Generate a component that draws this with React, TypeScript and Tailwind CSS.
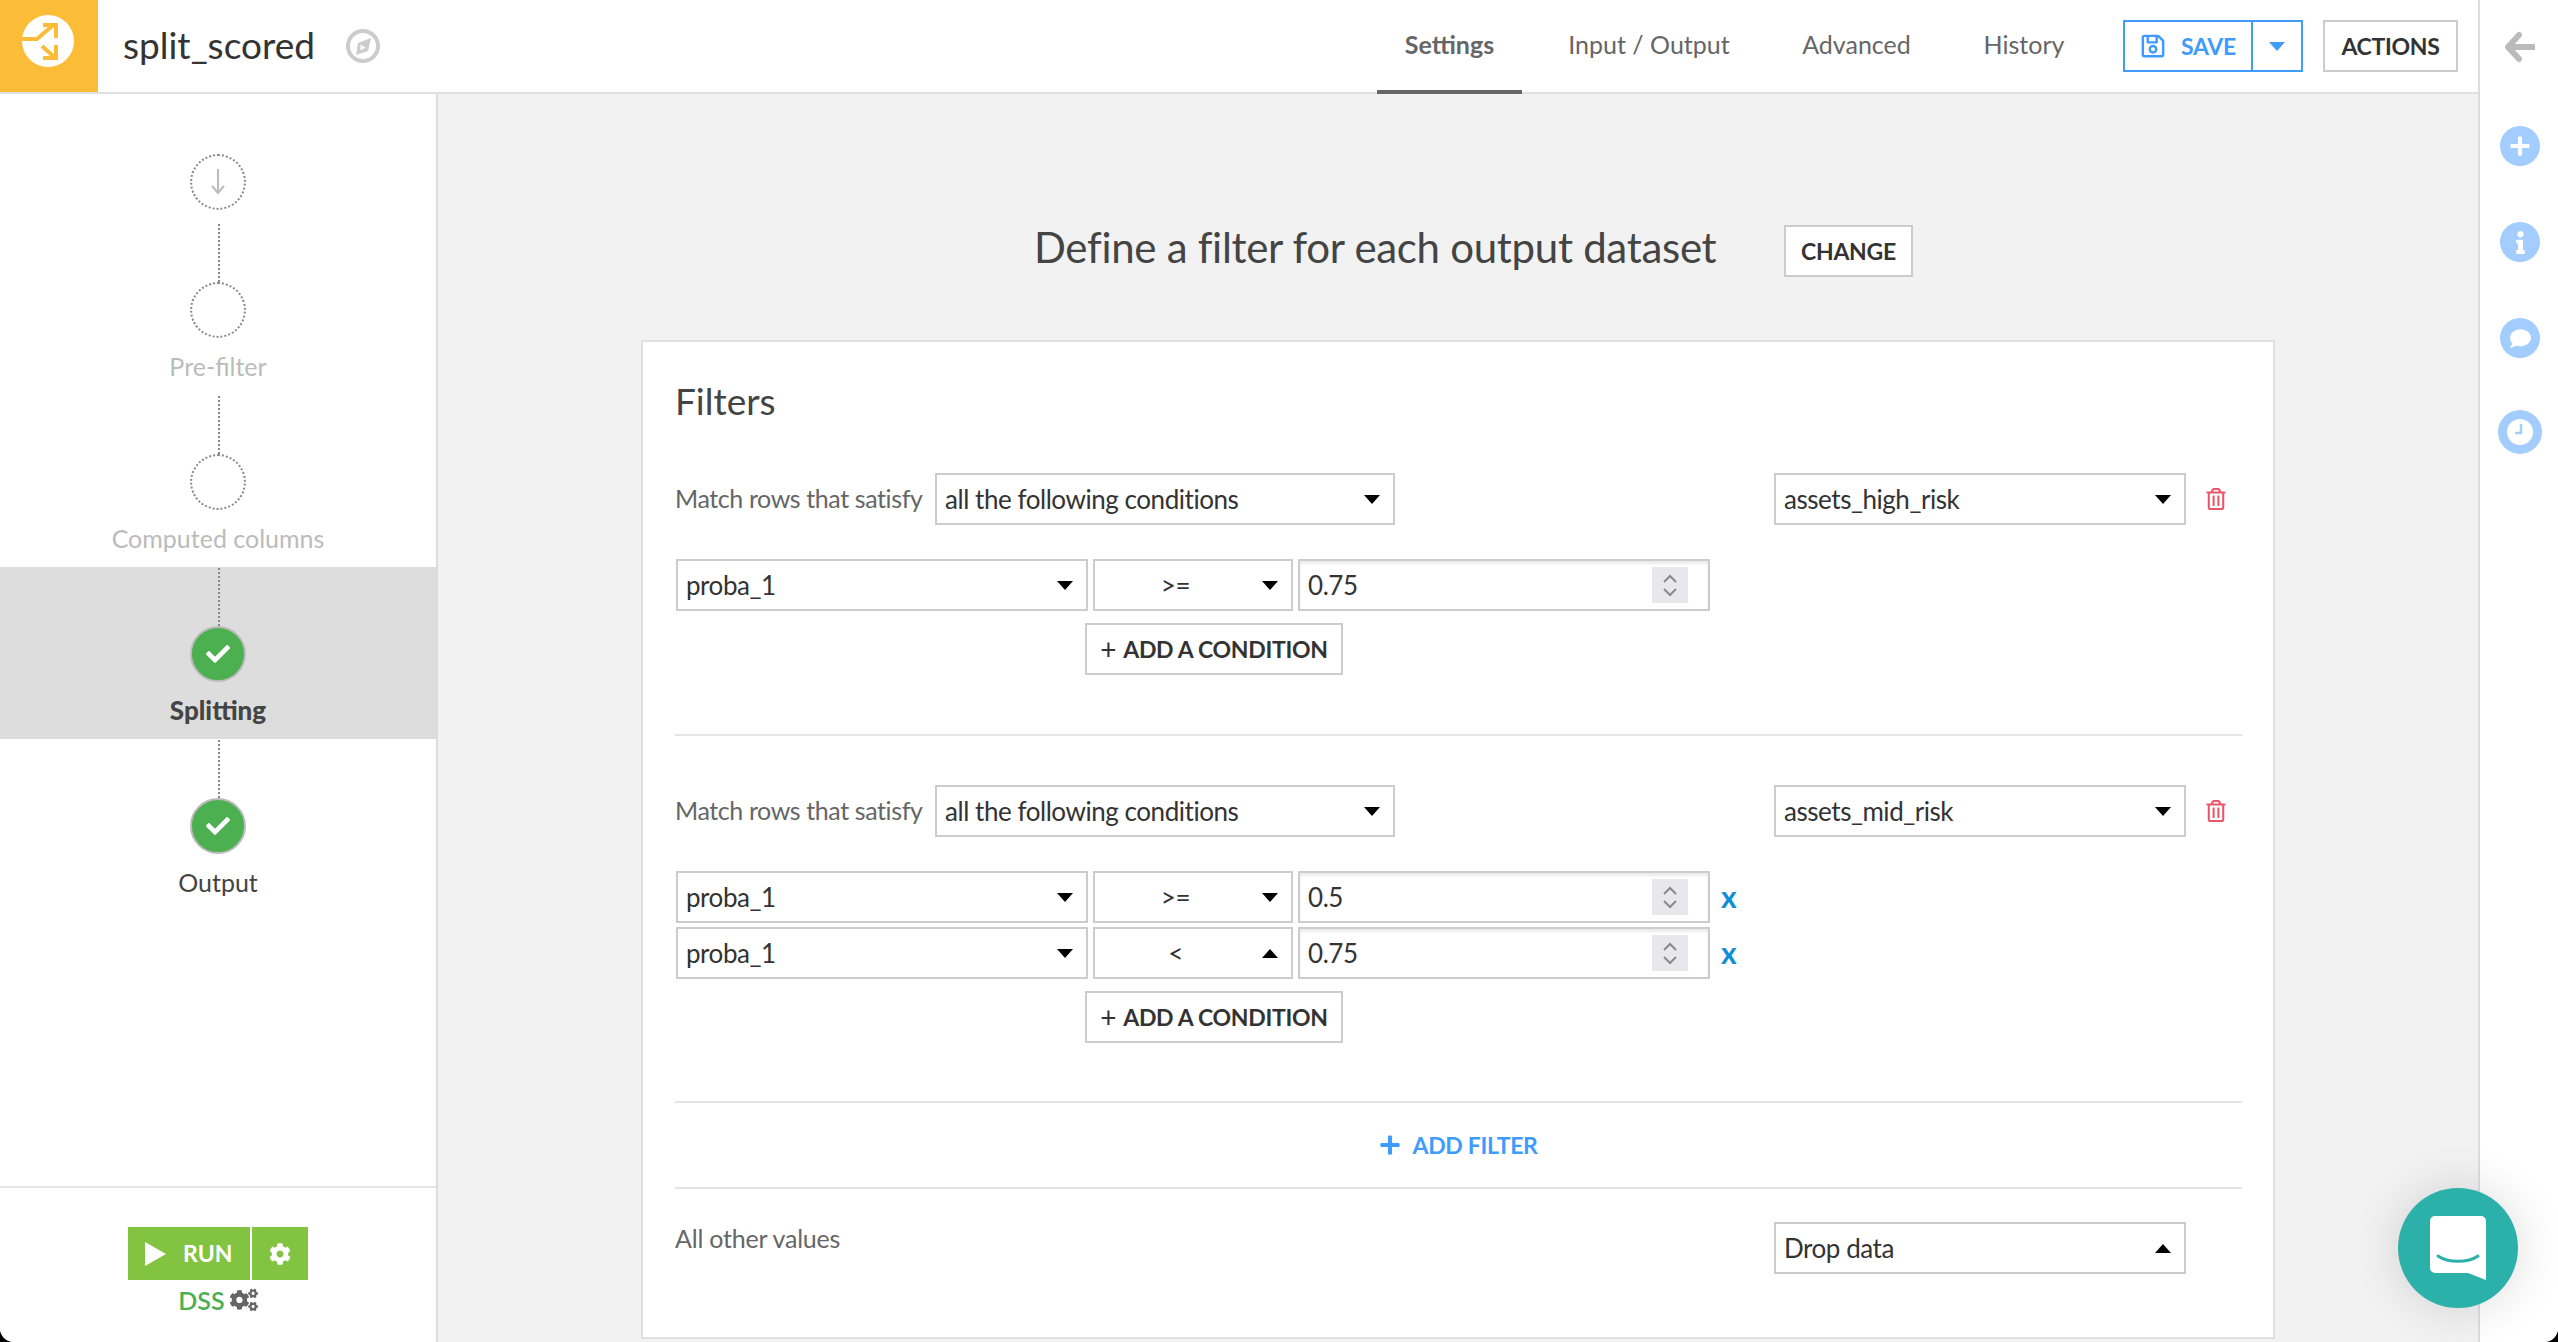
import { FaCheck, FaCog, FaCogs, FaComment, FaInfo, FaPlus, FaRegSave, FaRegTrashAlt } from 'react-icons/fa';

function Arrow({ up = false, color = '#000' }: { up?: boolean; color?: string }) {
  return (
    <svg width="16" height="9" viewBox="0 0 16 9" className="shrink-0">
      <polygon points={up ? '8,0 16,9 0,9' : '0,0 16,0 8,9'} fill={color} />
    </svg>
  );
}

function Select({ value, width, up = false, center = false }: { value: string; width: string; up?: boolean; center?: boolean }) {
  return (
    <div className={`flex h-[52px] shrink-0 items-center justify-between border-2 border-[#ccc] bg-white pl-[8px] pr-[13px] text-[26px] tracking-[-0.45px] text-[#333] ${width}`}>
      <span className={center ? 'flex-1 pr-[14px] text-center' : ''}>{value}</span>
      <Arrow up={up} />
    </div>
  );
}

function NumberInput({ value }: { value: string }) {
  return (
    <div className="flex h-[52px] w-[412px] shrink-0 items-center justify-between border-2 border-[#ccc] bg-white pl-[8px] pr-[20px] text-[26px] tracking-[-0.45px] text-[#333] shadow-[inset_0_3px_3px_rgba(0,0,0,0.08)]">
      <span>{value}</span>
      <div className="flex h-[36px] w-[36px] flex-col items-center justify-center gap-[5px] bg-[#e8e8ec]">
        <svg width="14" height="9" viewBox="0 0 14 9"><path d="M1 8l6-6 6 6" fill="none" stroke="#8a8a8a" strokeWidth="2" /></svg>
        <svg width="14" height="9" viewBox="0 0 14 9"><path d="M1 1l6 6 6-6" fill="none" stroke="#8a8a8a" strokeWidth="2" /></svg>
      </div>
    </div>
  );
}

function Button({ children, className = '' }: { children: React.ReactNode; className?: string }) {
  return (
    <div className={`flex h-[52px] items-center justify-center border-2 border-[#ccc] bg-white text-[23px] font-bold tracking-[-0.3px] text-[#333] ${className}`}>
      {children}
    </div>
  );
}

function ConditionRow({ op, value, up = false, removable = false }: { op: string; value: string; up?: boolean; removable?: boolean }) {
  return (
    <div className="ml-px flex items-center gap-[5px]">
      <Select value="proba_1" width="w-[412px]" />
      <Select value={op} width="w-[200px]" up={up} center />
      <NumberInput value={value} />
      {removable && <span className="mb-[3px] ml-[6px] text-[30px] leading-[28px] font-bold text-[#0f8fd6]">x</span>}
    </div>
  );
}

function FilterBlock({ output, children, spacing }: { output: string; children: React.ReactNode; spacing: string }) {
  return (
    <div className={`border-b-2 border-[#e4e4e4] ${spacing}`}>
      <div className="flex items-center">
        <div className="w-[260px] shrink-0 text-[25px] tracking-[-0.4px] text-[#666]">Match rows that satisfy</div>
        <Select value="all the following conditions" width="w-[460px]" />
        <div className="ml-[379px]">
          <Select value={output} width="w-[412px]" />
        </div>
        <FaRegTrashAlt className="ml-[19px] text-[#e8566b]" size={22} />
      </div>
      <div className="mt-[34px] flex flex-col gap-[4px]">{children}</div>
      <Button className="ml-[410px] mt-[12px] w-[258px]">
        <span className="mr-[7px] text-[28px] font-normal">+</span>ADD A CONDITION
      </Button>
    </div>
  );
}

function Step({ label, state }: { label: string; state: 'todo' | 'done' | 'active' }) {
  const labelColor = state === 'todo' ? 'text-[#bbb]' : 'text-[#444]';
  return (
    <div className={`flex h-[172px] flex-col items-center ${state === 'active' ? 'bg-[#ddd]' : ''}`}>
      <div className="ml-[2px] mt-px h-[58px] border-l-2 border-dotted border-[#888]" />
      {state === 'todo' ? (
        <div className="h-[56px] w-[56px] rounded-full border-2 border-dotted border-[#888]" />
      ) : (
        <div className="flex h-[56px] w-[56px] items-center justify-center rounded-full border-2 border-[#bbb] bg-[#4caf50]">
          <FaCheck className="text-white" size={24} />
        </div>
      )}
      <div className={`mt-[13px] leading-[30px] ${labelColor} ${state === 'active' ? 'text-[26px] font-black' : 'text-[25px]'}`}>{label}</div>
    </div>
  );
}

function RailDot({ children, className = '' }: { children: React.ReactNode; className?: string }) {
  return <div className={`flex h-[40px] w-[40px] items-center justify-center rounded-full bg-[#a3cdfe] text-white ${className}`}>{children}</div>;
}

export default function App() {
  return (
    <div className="h-screen w-full overflow-hidden bg-black">
      <div className="relative flex h-full w-full overflow-hidden rounded-b-[14px] bg-white font-['Lato',sans-serif] text-[#333]">
        <div className="flex min-w-0 flex-1 flex-col">
          {/* Top bar */}
          <header className="flex h-[94px] shrink-0 items-start border-b-2 border-[#e0e0e0] bg-white">
            <div className="flex h-[92px] w-[98px] shrink-0 items-center justify-center bg-[#fbbd38]">
              <svg width="98" height="92" viewBox="0 0 98 92">
                <circle cx="48" cy="41" r="26" fill="#fff" />
                <path d="M22 39h15l15-13M43 25h13v13M42 46l12 11M43 58h13V45" fill="none" stroke="#fbbd38" strokeWidth="4" />
              </svg>
            </div>
            <div className="ml-[25px] mt-[22px] text-[37px] leading-[46px] text-[#333]">split_scored</div>
            <svg width="36" height="36" viewBox="0 0 36 36" className="ml-[30px] mt-[28px]">
              <circle cx="18" cy="18" r="15" fill="none" stroke="#ccc" strokeWidth="4" />
              <path d="M26 10l-3 13-12 4 2-12z" fill="#ccc" />
              <path d="M15.500 16.500v6l5-3z" fill="#fff" />
            </svg>
            <nav className="ml-auto flex h-[94px] text-[25px] text-[#666]">
              <div className="flex h-full w-[145px] items-center justify-center border-b-4 border-[#666] font-bold">Settings</div>
              <div className="ml-[20px] flex h-full w-[212px] items-center justify-center pb-[4px] pl-[2px]">Input / Output</div>
              <div className="ml-[22px] flex h-full w-[159px] items-center justify-center pb-[4px] pl-[2px]">Advanced</div>
              <div className="ml-[23px] flex h-full w-[130px] items-center justify-center pb-[4px] pl-[2px]">History</div>
            </nav>
            <div className="ml-[35px] mt-[20px] flex h-[52px] w-[180px] border-2 border-[#3f9bfc] text-[#3f9bfc]">
              <div className="flex w-[128px] items-center justify-center gap-[15px] border-r-2 border-[#3f9bfc] text-[23px] font-bold tracking-[-0.3px]">
                <FaRegSave size={26} />
                SAVE
              </div>
              <div className="flex flex-1 items-center justify-center">
                <Arrow color="#3f9bfc" />
              </div>
            </div>
            <div className="ml-[20px] mr-[20px] mt-[20px] flex h-[52px] w-[135px] items-center justify-center border-2 border-[#ccc] text-[23px] font-bold tracking-[-0.3px]">ACTIONS</div>
          </header>

          <div className="flex min-h-0 flex-1">
            {/* Recipe steps */}
            <aside className="flex w-[438px] shrink-0 flex-col justify-between border-r-2 border-[#ddd] bg-white">
              <div>
                <div className="mx-auto mb-[13px] mt-[60px] flex h-[56px] w-[56px] items-center justify-center rounded-full border-2 border-dotted border-[#888]">
                  <svg width="14" height="26" viewBox="0 0 14 26">
                    <path d="M7 0v24M1 17l6 7 6-7" fill="none" stroke="#bbb" strokeWidth="2" />
                  </svg>
                </div>
                <Step label="Pre-filter" state="todo" />
                <Step label="Computed columns" state="todo" />
                <Step label="Splitting" state="active" />
                <Step label="Output" state="done" />
              </div>
              <div className="flex h-[156px] shrink-0 flex-col items-center border-t-2 border-[#e4e4e4] pt-[39px]">
                <div className="flex h-[53px] gap-[2px] text-white">
                  <div className="flex w-[122px] items-center gap-[17px] bg-[#82c341] pl-[17px] text-[23px] font-bold">
                    <svg width="21" height="24" viewBox="0 0 21 24"><polygon points="0,0 21,12 0,24" fill="#fff" /></svg>
                    RUN
                  </div>
                  <div className="flex w-[56px] items-center justify-center bg-[#82c341]">
                    <FaCog size={22} />
                  </div>
                </div>
                <div className="mt-[5px] flex items-center gap-[5px] text-[25px] font-semibold leading-[30px] text-[#4caf50]">
                  DSS
                  <FaCogs className="text-[#666]" size={28} />
                </div>
              </div>
            </aside>

            {/* Settings */}
            <main className="min-w-0 flex-1 bg-[#f2f2f2]">
              <div className="mx-auto w-[1634px]">
                <div className="mb-[63px] mt-[131px] flex h-[52px] items-center pl-[393px]">
                  <h1 className="w-[750px] shrink-0 pb-[7px] text-[42px] tracking-[-0.3px] text-[#444]">Define a filter for each output dataset</h1>
                  <Button className="w-[129px]">CHANGE</Button>
                </div>
                <section className="h-[999px] border-2 border-[#e0e0e0] bg-white pl-[32px] pr-[31px] pt-[39px]">
                  <h2 className="text-[37px] leading-[40px] text-[#444]">Filters</h2>
                  <FilterBlock output="assets_high_risk" spacing="mt-[52px] pb-[59px]">
                    <ConditionRow op=">=" value="0.75" />
                  </FilterBlock>
                  <FilterBlock output="assets_mid_risk" spacing="pt-[49px] pb-[58px]">
                    <ConditionRow op=">=" value="0.5" removable />
                    <ConditionRow op="<" value="0.75" up removable />
                  </FilterBlock>
                  <div className="flex h-[86px] items-center justify-center gap-[11px] border-b-2 border-[#e4e4e4] text-[23px] font-bold tracking-[-0.3px] text-[#3f9bfc]">
                    <FaPlus size={22} />
                    ADD FILTER
                  </div>
                  <div className="flex items-start pt-[33px]">
                    <div className="mt-[1px] w-[1099px] shrink-0 text-[25px] leading-[30px] tracking-[-0.2px] text-[#666]">All other values</div>
                    <Select value="Drop data" width="w-[412px]" up />
                  </div>
                </section>
              </div>
            </main>
          </div>
        </div>

        {/* Right rail */}
        <div className="flex w-[80px] shrink-0 flex-col items-center border-l-2 border-[#ddd] bg-white pl-[2px]">
          <svg width="30" height="32" viewBox="0 0 30 32" className="mt-[31px] text-[#bbb]">
            <path d="M14 4L3 16l11 12M4 16h24" fill="none" stroke="currentColor" strokeWidth="6" strokeLinecap="round" strokeLinejoin="round" />
          </svg>
          <RailDot className="mt-[63px]"><FaPlus size={22} /></RailDot>
          <RailDot className="mt-[56px]"><FaInfo size={23} /></RailDot>
          <RailDot className="mt-[56px]"><FaComment size={21} /></RailDot>
          <div className="mt-[52px] flex h-[44px] w-[44px] items-center justify-center rounded-full bg-[#a3cdfe]">
            <svg width="28" height="28" viewBox="0 0 28 28">
              <circle cx="14" cy="14" r="13" fill="#fff" />
              <path d="M15 6v9H9" fill="none" stroke="#a3cdfe" strokeWidth="2.500" />
            </svg>
          </div>
        </div>

        {/* Chat launcher */}
        <div className="absolute left-[2398px] top-[1188px] flex h-[120px] w-[120px] items-center justify-center rounded-full bg-[#2bb1a9] shadow-[0_0_50px_rgba(0,0,0,0.14)]">
          <svg width="58" height="66" viewBox="0 0 58 66">
            <path d="M6 1h46a5 5 0 0 1 5 5v59l-18-7H6a5 5 0 0 1-5-5V6a5 5 0 0 1 5-5z" fill="#fff" />
            <path d="M9 41c10 7 30 7 40 0" fill="none" stroke="#2bb1a9" strokeWidth="3" strokeLinecap="round" />
          </svg>
        </div>
      </div>
    </div>
  );
}
